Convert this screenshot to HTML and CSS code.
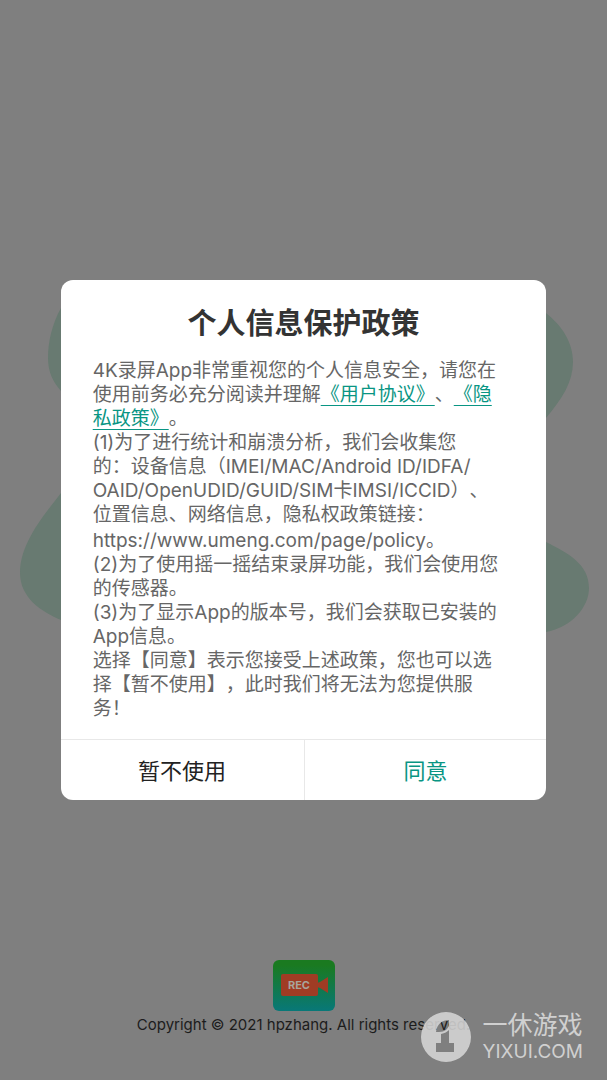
FILE: index.html
```html
<!doctype html>
<html lang="zh-CN">
    <head>
        <meta charset="utf-8">
        <meta name="viewport" content="width=device-width, initial-scale=1">
        <title>个人信息保护政策</title>
        <link rel="stylesheet" href="styles.css">
    </head>
    <body>
        <div class="screen">
            <!-- background shapes -->
            <svg class="blobs" viewBox="0 0 607 380" aria-hidden="true">
                <path d="M120 20C90 20 70 22 61 38C52 54 48 72 48 88C48 102 53 112 61 121C95 160 90 186 61 223C38 252 20 276 20 303C20 328 42 342 61 350C150 370 480 372 546 362C572 357 589 337 589 318C589 294 568 283 546 272C490 250 495 205 546 148C562 129 573 112 573 92C573 72 562 56 546 43C520 24 470 20 430 20Z"/>
            </svg>

            <main class="dialog" role="dialog" aria-labelledby="dialog-title">
                <div class="content">
                    <h1 id="dialog-title">个人信息保护政策</h1>
                    <p>4K录屏App非常重视您的个人信息安全，请您在<br>使用前务必充分阅读并理解<a href="#agreement">《用户协议》</a>、<a href="#privacy">《隐<br>私政策》</a>。</p>
                    <p>(1)为了进行统计和崩溃分析，我们会收集您<br>的：设备信息（IMEI/MAC/Android ID/IDFA/<br>OAID/OpenUDID/GUID/SIM卡IMSI/ICCID）、<br>位置信息、网络信息，隐私权政策链接：</p>
                    <p class="policy-url">https://www.umeng.com/page/policy。</p>
                    <p>(2)为了使用摇一摇结束录屏功能，我们会使用您<br>的传感器。</p>
                    <p>(3)为了显示App的版本号，我们会获取已安装的<br>App信息。</p>
                    <p>选择【同意】表示您接受上述政策，您也可以选<br>择【暂不使用】，此时我们将无法为您提供服<br>务！</p>
                </div>
                <div class="actions">
                    <button type="button">暂不使用</button>
                    <button type="button" class="agree">同意</button>
                </div>
            </main>

            <footer class="footer">
                <svg class="logo" viewBox="0 0 62 51" aria-hidden="true">
                    <defs>
                        <linearGradient id="logo-bg" x1="0" y1="0" x2="0" y2="1">
                            <stop offset="0.1" stop-color="#1a7a20"/>
                            <stop offset="1" stop-color="#087878"/>
                        </linearGradient>
                    </defs>
                    <rect width="62" height="51" rx="6" fill="url(#logo-bg)"/>
                    <rect x="8" y="14" width="37" height="22" rx="2" fill="#a03c24"/>
                    <path d="M44 23L47 22L55 17V33L47 28L44 27Z" fill="#a03c24"/>
                    <text class="rec" x="26" y="29" text-anchor="middle">REC</text>
                </svg>
                <p>Copyright © 2021 hpzhang. All rights reserved.</p>
            </footer>

            <div class="watermark">
                <svg class="mark" viewBox="0 0 50 50" aria-hidden="true">
                    <path class="disc" fill-rule="evenodd" d="M25 0A25 25 0 1 1 25 50A25 25 0 1 1 25 0ZM28 8C21 8 16 12 15 20H18C24 20 27 17 28 13ZM20 22V31H15V40H33V31H28V18C26 20 24 21 20 22Z"/>
                </svg>
                <div class="brand">
                    <span class="brand-name">一休游戏</span>
                    <span class="brand-url">YIXUI.COM</span>
                </div>
            </div>
        </div>
    </body>
</html>
```
FILE: styles.css
```css
*{
    box-sizing: border-box;
}
body{
    margin: 0;
    background-color: #7f7f7f;
    font-family: Inter, "Noto Sans CJK SC", sans-serif;
    text-spacing-trim: space-all;
}
h1, p{
    margin: 0;
}
.screen{
    position: relative;
    display: grid;
    min-height: 100vh;
}
.blobs{
    position: absolute;
    top: 50%;
    left: 0;
    width: 100%;
    margin-top: -270px;
    fill: #687a71;
}

/* dialog */
.dialog{
    grid-area: 1 / 1;
    place-self: center;
    position: relative;
    width: 80%;
    background-color: #fff;
    border-radius: 12px;
    overflow: hidden;
}
.content{
    padding: 25px 32px 18px;
    color: #666;
    font-size: 19px;
    line-height: 24px;
    white-space: nowrap;
}
h1{
    margin-bottom: 16px;
    color: #333;
    font-size: 29px;
    line-height: 38px;
    text-align: center;
}
a{
    color: #099583;
    text-underline-offset: 4px;
}
.policy-url{
    padding-top: 2px;
}
.actions{
    display: grid;
    grid-template-columns: 1fr 1fr;
    border-top: 1px solid #e8e8e8;
}
button{
    height: 60px;
    padding: 0 0 3px;
    border: 0;
    background: none;
    color: #222;
    font: inherit;
    font-size: 22px;
}
.agree{
    border-left: 1px solid #e8e8e8;
    color: #099583;
}

/* footer */
.footer{
    grid-area: 1 / 1;
    align-self: end;
    padding-bottom: 45px;
    color: #1c1c1c;
    font-size: 15px;
    line-height: 20px;
    text-align: center;
}
.logo{
    display: block;
    width: 62px;
    height: 51px;
    margin: 0 auto 4px;
}
.rec{
    fill: #a8a49c;
    font-size: 11px;
    font-weight: bold;
}

/* site mark over the page */
.watermark{
    position: absolute;
    right: 24px;
    bottom: 18px;
    display: flex;
    align-items: center;
    gap: 12px;
    color: #d0d0d0;
}
.mark{
    width: 50px;
    height: 50px;
}
.disc{
    fill: #d6d6d6;
    fill-opacity: 0.88;
}
.brand{
    display: flex;
    flex-direction: column;
    gap: 4px;
}
.brand-name{
    font-size: 25px;
    line-height: 26px;
}
.brand-url{
    font-size: 19px;
    line-height: 20px;
}
```
